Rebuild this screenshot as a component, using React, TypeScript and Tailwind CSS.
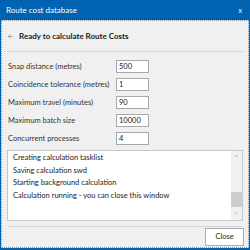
import { ArrowLeft } from 'lucide-react';

const fields = [
  { label: 'Snap distance (metres)', value: '500' },
  { label: 'Coincidence tolerance (metres)', value: '1' },
  { label: 'Maximum travel (minutes)', value: '90' },
  { label: 'Maximum batch size', value: '10000' },
  { label: 'Concurrent processes', value: '4' },
];

const log = [
  'Creating calculation tasklist',
  'Saving calculation swd',
  'Starting background calculation',
  'Calculation running - you can close this window',
];

export default function App() {
  return (
    <div
      className="w-[250px] h-[250px] bg-[#0063b1] flex flex-col overflow-hidden"
      style={{ fontFamily: 'Lato, "Noto Sans", sans-serif' }}
    >
      <div className="h-[20px] flex items-center justify-between pl-[6px] pr-[8px] text-white text-[8px]">
        <span>Route cost database</span>
        <span className="text-[7px]">x</span>
      </div>

      <div className="flex-1 mx-[1px] mb-[2px] bg-[#f0f0f0] border border-dotted border-[#9a9a9a] flex flex-col text-[#1a1a1a]">
        <div className="h-[30px] flex items-center gap-[5px] pl-[5px]">
          <ArrowLeft className="w-[7px] h-[7px] text-[#666]" strokeWidth={1.75} />
          <span className="font-bold text-[8px] whitespace-nowrap">Ready to calculate Route Costs</span>
        </div>
        <div className="mx-[5px] border-t border-[#d4d4d4]" />

        <div className="flex flex-col gap-[5px] pt-[8px] pl-[6px]">
          {fields.map((f) => (
            <div key={f.label} className="flex items-center h-[13px]">
              <span className="w-[108px] text-[7.5px] text-[#333] whitespace-nowrap">{f.label}</span>
              <div className="w-[33px] h-[13px] bg-white border border-[#a8a8a8] flex items-center px-[2px] text-[7.5px]">
                {f.value}
              </div>
            </div>
          ))}
        </div>

        <div className="mt-[5px] mx-[5px] h-[71px] bg-white border border-[#c8c8c8] flex">
          <div className="flex-1 flex flex-col pl-[5px] pt-[1px] text-[7.5px] leading-[12.5px] text-[#222] whitespace-nowrap overflow-hidden">
            {log.map((l) => (
              <span key={l}>{l}</span>
            ))}
          </div>
          <div className="w-[11px] bg-[#f0f0f0] flex flex-col items-center justify-between py-[3px]">
            <span className="text-[6px] text-[#999] leading-none">˄</span>
            <div className="w-full flex-1 flex flex-col justify-end pb-[4px] pt-[2px]">
              <div className="w-full h-[15px] bg-[#cdcdcd]" />
            </div>
            <span className="text-[6px] text-[#999] leading-none">˅</span>
          </div>
        </div>

        <div className="mt-[5px] mx-[6px] border-t border-[#d4d4d4]" />

        <div className="flex-1 flex items-center justify-end pr-[4px]">
          <button className="w-[39px] h-[18px] bg-white border border-[#adadad] text-[7.5px] text-[#222]">
            Close
          </button>
        </div>
      </div>
    </div>
  );
}
